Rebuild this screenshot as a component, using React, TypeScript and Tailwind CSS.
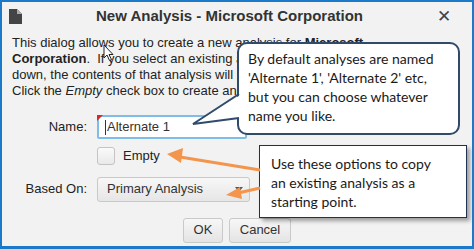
import React from "react";

// "New Analysis" dialog with two help callouts laid over it.
export default function App() {
  return (
    <div className="relative h-[249px] w-[474px] overflow-hidden border-2 border-b-[3px] border-[#1a79c8] bg-[#f2f2f2] font-['Liberation_Sans',Arial,sans-serif] text-[#222]">
      {/* Title bar */}
      <div className="flex h-[28px] items-center px-[7px]">
        <DocIcon />
        <div className="flex-1 text-center text-[15px] font-bold text-[#333]">
          New Analysis - Microsoft Corporation
        </div>
        <span className="pr-[14px] text-[17px] leading-none text-[#444]">✕</span>
      </div>

      {/* Body */}
      <div className="px-[10px] pt-[5px]">
        <p className="text-[13px] leading-[16px]">
          This dialog allows you to create a new analysis for <b>Microsoft</b>
          <br />
          <b>Corporation</b>.&nbsp; If you select an existing analysis in the drop
          <br />
          down, the contents of that analysis will be copied to the new one.
          <br />
          Click the <i>Empty</i> check box to create an empty analysis.
        </p>

        <div className="mt-[16px] flex items-center gap-[10px]">
          <label className="w-[75px] text-right text-[13px]">Name:</label>
          <div className="relative flex h-[24px] w-[150px] items-center rounded-[2px] border-2 border-[#7dbde8] bg-white pl-[6px] text-[13px] text-[#333]">
            <span className="mr-[1px] inline-block h-[15px] w-[1px] bg-[#333]" />
            Alternate 1
            <span className="absolute -left-[2px] -top-[2px] h-0 w-0 border-r-[6px] border-t-[6px] border-r-transparent border-t-[#d9262a]" />
          </div>
        </div>

        <div className="mt-[7px] flex items-center gap-[8px] pl-[85px]">
          <span className="h-[18px] w-[18px] rounded-[3px] border border-[#c4c4c4] bg-gradient-to-b from-[#fafafa] to-[#e9e9e9]" />
          <span className="text-[13px]">Empty</span>
        </div>

        <div className="mt-[11px] flex items-center gap-[10px]">
          <label className="w-[75px] text-right text-[13px]">Based On:</label>
          <div className="flex h-[25px] w-[153px] items-center justify-between rounded-[3px] border border-[#c9c9c9] bg-gradient-to-b from-[#f7f7f7] to-[#e6e6e6] pl-[9px] pr-[6px] text-[13px] text-[#333]">
            Primary Analysis
            <span className="h-0 w-0 border-l-[4px] border-r-[4px] border-t-[5px] border-l-transparent border-r-transparent border-t-[#555]" />
          </div>
        </div>

        <div className="mt-[16px] flex justify-center gap-[6px]">
          <button className="h-[25px] w-[40px] rounded-[3px] border border-[#c9c9c9] bg-gradient-to-b from-[#f7f7f7] to-[#e4e4e4] text-[13px] text-[#333]">
            OK
          </button>
          <button className="h-[25px] w-[62px] rounded-[3px] border border-[#c9c9c9] bg-gradient-to-b from-[#f7f7f7] to-[#e4e4e4] text-[13px] text-[#333]">
            Cancel
          </button>
        </div>
      </div>

      {/* Mouse pointer */}
      <svg className="absolute left-[101px] top-[42px]" width="12" height="18" viewBox="0 0 12 18">
        <path d="M1 1 L1 14 L4 11 L6.5 16.5 L8.5 15.5 L6 10.5 L10 10.5 Z" fill="#fff" stroke="#222" strokeWidth="1" />
      </svg>

      {/* Callout: naming */}
      <div className="absolute left-[235px] top-[40px] h-[93px] w-[223px] rounded-[10px] border-2 border-[#2f4a6b] bg-white pl-[9px] pt-[5px] font-['Lato',sans-serif] text-[14px] leading-[19px] text-[#1a1a1a]">
        By default analyses are named
        <br />
        'Alternate 1', 'Alternate 2' etc,
        <br />
        but you can choose whatever
        <br />
        name you like.
      </div>
      <svg className="pointer-events-none absolute left-0 top-0" width="474" height="249">
        <polygon points="240,92 191,122 240,116" fill="#fff" />
        <polyline points="237,92 191,122 237,116" fill="none" stroke="#2f4a6b" strokeWidth="2" strokeLinejoin="miter" />
      </svg>

      {/* Callout: copy options */}
      <div className="absolute left-[257px] top-[143px] h-[73px] w-[208px] border border-[#1f3350] bg-white pl-[11px] pt-[8px] font-['Lato',sans-serif] text-[14px] leading-[19px] text-[#1a1a1a] shadow-[3px_3px_4px_rgba(0,0,0,0.35)]">
        Use these options to copy
        <br />
        an existing analysis as a
        <br />
        starting point.
      </div>

      {/* Orange arrows */}
      <svg className="pointer-events-none absolute left-0 top-0" width="474" height="249">
        <line x1="258" y1="168" x2="178" y2="155" stroke="#f3954c" strokeWidth="3" />
        <polygon points="165,152 181,146 179,161" fill="#f3954c" />
        <line x1="258" y1="186" x2="236" y2="191" stroke="#f3954c" strokeWidth="3" />
        <polygon points="224,193 238,185 240,197" fill="#f3954c" />
      </svg>
    </div>
  );
}

function DocIcon() {
  return (
    <svg width="13" height="15" viewBox="0 0 13 15">
      <path d="M0 0 H8 L13 5 V15 H0 Z" fill="#444" />
      <path d="M8 0 V5 H13" fill="#aaa" />
    </svg>
  );
}
